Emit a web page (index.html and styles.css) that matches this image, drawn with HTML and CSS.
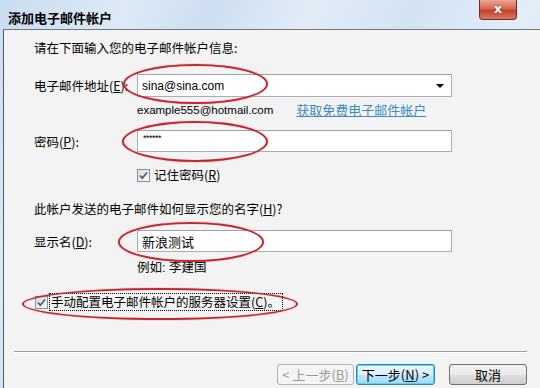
FILE: index.html
```html
<!DOCTYPE html>
<html lang="zh-CN">
  <head>
    <meta charset="UTF-8" />
    <title>添加电子邮件帐户</title>
    <link rel="stylesheet" href="styles.css">
  </head>
  <body>
    <div class="window">
      <!-- 标题栏 -->
      <div class="titlebar">
        <span class="title">添加电子邮件帐户</span>
        <span class="close">x</span>
      </div>

      <div class="client">
        <div class="form">
          <p class="intro">请在下面输入您的电子邮件帐户信息:</p>

          <div class="row row-email">
            <label class="label">电子邮件地址(<u>E</u>):</label>
            <div class="field combo">
              <span class="value">sina@sina.com</span>
              <span class="arrow"></span>
            </div>
          </div>
          <div class="hint hint-email">
            <span class="latin">example555@hotmail.com</span>
            <a class="link" href="#">获取免费电子邮件帐户</a>
          </div>

          <div class="row row-pass">
            <label class="label">密码(<u>P</u>):</label>
            <div class="field"><span class="stars">******</span></div>
          </div>
          <div class="check check-remember">
            <span class="box">
              <svg width="13" height="13" viewBox="0 0 13 13"><path d="M3 6.5 L5.3 9.2 L10 3.5" fill="none" stroke="#3a5f8f" stroke-width="1.8"/></svg>
            </span>
            <span>记住密码(<u>R</u>)</span>
          </div>

          <p class="question">此帐户发送的电子邮件如何显示您的名字(<u>H</u>)?</p>

          <div class="row row-name">
            <label class="label">显示名(<u>D</u>):</label>
            <div class="field"><span class="value">新浪测试</span></div>
          </div>
          <div class="hint hint-name">例如: 李建国</div>

          <div class="check check-manual">
            <span class="box">
              <svg width="13" height="13" viewBox="0 0 13 13"><path d="M3 6.5 L5.3 9.2 L10 3.5" fill="none" stroke="#3a5f8f" stroke-width="1.8"/></svg>
            </span>
            <span class="focus">手动配置电子邮件帐户的服务器设置(<u>C</u>)。</span>
          </div>
        </div>

        <div class="footer">
          <div class="sep"></div>
          <div class="buttons">
            <button class="btn" disabled>&lt; 上一步(<u>B</u>)</button>
            <button class="btn btn-focus">下一步(<u>N</u>) &gt;</button>
            <button class="btn btn-cancel">取消</button>
          </div>
        </div>

        <!-- 红色圈注 -->
        <span class="mark mark-email"></span>
        <span class="mark mark-pass"></span>
        <span class="mark mark-name"></span>
        <span class="mark mark-manual"></span>
      </div>
    </div>
  </body>
</html>
```

FILE: styles.css
```css
body {
  margin: 0;
  padding: 0;
  font-family: "Liberation Sans", "Noto Sans CJK SC", sans-serif;
  font-size: 12.5px;
  color: #000;
  background-color: #f3f3f3;
}

.window {
  width: 540px;
  height: 388px;
  display: flex;
  flex-direction: column;
  padding-left: 3px;
  box-sizing: border-box;
  background: linear-gradient(115deg, #c9dcf0 0%, #dde9f6 18%, #cddef1 30%, #e2ecf7 44%, #d3e2f3 58%, #e3edf8 74%, #d0dff1 100%);
  overflow: hidden;
}

/* 标题栏 */
.titlebar {
  height: 29px;
  display: flex;
  align-items: center;
  position: relative;
  flex-shrink: 0;
}

.title {
  font-family: "Noto Sans CJK SC", sans-serif;
  font-weight: bold;
  font-size: 13px;
  margin-left: 5px;
  margin-top: 6px;
}

.close {
  position: absolute;
  top: 0;
  left: 476px;
  width: 38px;
  height: 20px;
  box-sizing: border-box;
  border: 1px solid #6b2a22;
  border-top: none;
  border-radius: 0 0 4px 4px;
  background: linear-gradient(#eaa596 0%, #d8674f 45%, #c4412a 55%, #da7b60 100%);
  color: #fff;
  font-family: "DejaVu Sans", sans-serif;
  font-weight: bold;
  font-size: 13px;
  line-height: 17px;
  text-align: center;
  text-shadow: 0 0 2px #6b2a22;
}

.client {
  flex: 1;
  position: relative;
  display: flex;
  flex-direction: column;
  background-color: #f3f3f3;
  border-top: 1px solid #6d7a86;
  border-left: 1px solid #4f5a64;
}

.form {
  padding-left: 30px;
}

p {
  margin: 0;
}

.intro {
  margin-top: 10px;
  line-height: 16px;
  font-family: "Noto Sans CJK SC", sans-serif;
}

.row {
  display: flex;
  align-items: center;
}

.label {
  width: 103px;
  font-family: "Noto Sans CJK SC", sans-serif;
}

.field {
  width: 315px;
  height: 22px;
  box-sizing: border-box;
  border: 1px solid #abadb3;
  border-top-color: #9fa1a8;
  background-color: #fff;
  display: flex;
  align-items: center;
  padding-left: 4px;
}

.value {
  font-family: "Liberation Sans", "Noto Sans CJK SC", sans-serif;
  font-size: 12px;
}

.row-name .value {
  font-size: 13px;
}

.combo {
  height: 23px;
  justify-content: space-between;
  padding-right: 7px;
}

.arrow {
  width: 0;
  height: 0;
  border-left: 4px solid transparent;
  border-right: 4px solid transparent;
  border-top: 4px solid #000;
}

.stars {
  font-size: 9px;
  line-height: 9px;
  margin-top: -6px;
  margin-left: 1px;
  letter-spacing: -0.5px;
}

.row-email {
  margin-top: 18px;
}

.hint {
  margin-left: 103px;
  line-height: 16px;
  font-family: "Liberation Sans", "Noto Sans CJK SC", sans-serif;
}

.latin {
  font-size: 11.5px;
}

.hint-email {
  margin-top: 5px;
  display: flex;
  gap: 23px;
}

.link {
  color: #3b8cc4;
  font-family: "Noto Sans CJK SC", sans-serif;
  font-size: 13px;
}

.row-pass {
  margin-top: 12px;
}

.check {
  display: flex;
  align-items: center;
  gap: 4px;
  line-height: 16px;
  font-family: "Noto Sans CJK SC", sans-serif;
}

.box {
  width: 13px;
  height: 13px;
  box-sizing: border-box;
  border: 1px solid #8f8f8f;
  background: linear-gradient(135deg, #dcdcdc, #fbfbfb);
  display: flex;
}

.box svg {
  margin: -1px;
}

.check-remember {
  margin-top: 15px;
  margin-left: 103px;
}

.question {
  margin-top: 18px;
  line-height: 16px;
  font-family: "Noto Sans CJK SC", sans-serif;
}

.row-name {
  margin-top: 13px;
}

.hint-name {
  margin-top: 8px;
}

.check-manual {
  margin-top: 18px;
  margin-left: 1px;
  gap: 2px;
}

.focus {
  outline: 1px dotted #000;
  outline-offset: 0;
  padding: 0 2px 0 1px;
}

.footer {
  margin-top: auto;
  padding: 0 13px 3px 10px;
}

.sep {
  height: 1px;
  background-color: #a0a0a0;
  border-bottom: 1px solid #fff;
}

.buttons {
  margin-top: 11px;
  display: flex;
  justify-content: flex-end;
}

.btn {
  height: 21px;
  width: 77px;
  box-sizing: border-box;
  border: 1px solid #707070;
  border-radius: 3px;
  background: linear-gradient(#f2f2f2 0%, #ebebeb 50%, #dddddd 51%, #cfcfcf 100%);
  font-family: "Noto Sans CJK SC", sans-serif;
  font-size: 13px;
  line-height: 17px;
  padding: 0;
  color: #000;
}

.btn:disabled {
  border-color: #adb2b5;
  background: #f4f4f4;
  color: #9a9a9a;
}

.btn-focus {
  margin-left: 2px;
  width: 79px;
  border-color: #3c7fb1;
  box-shadow: inset 0 0 0 1px #48d8fb;
  background: linear-gradient(#eaf6fd 0%, #d9f0fc 50%, #bee6fd 51%, #a7d9f5 100%);
}

.btn-cancel {
  margin-left: 14px;
  width: 78px;
}

/* 红色圈注 */
.mark {
  position: absolute;
  border: 2px solid #c3262d;
  border-radius: 50%;
  box-shadow: 0 0 1px #c3262d;
}

.mark-email {
  left: 119px;
  top: 34px;
  width: 141px;
  height: 36px;
}

.mark-pass {
  left: 118px;
  top: 91px;
  width: 142px;
  height: 37px;
}

.mark-name {
  left: 114px;
  top: 192px;
  width: 142px;
  height: 36px;
}

.mark-manual {
  left: 18px;
  top: 258px;
  width: 272px;
  height: 28px;
}
```
